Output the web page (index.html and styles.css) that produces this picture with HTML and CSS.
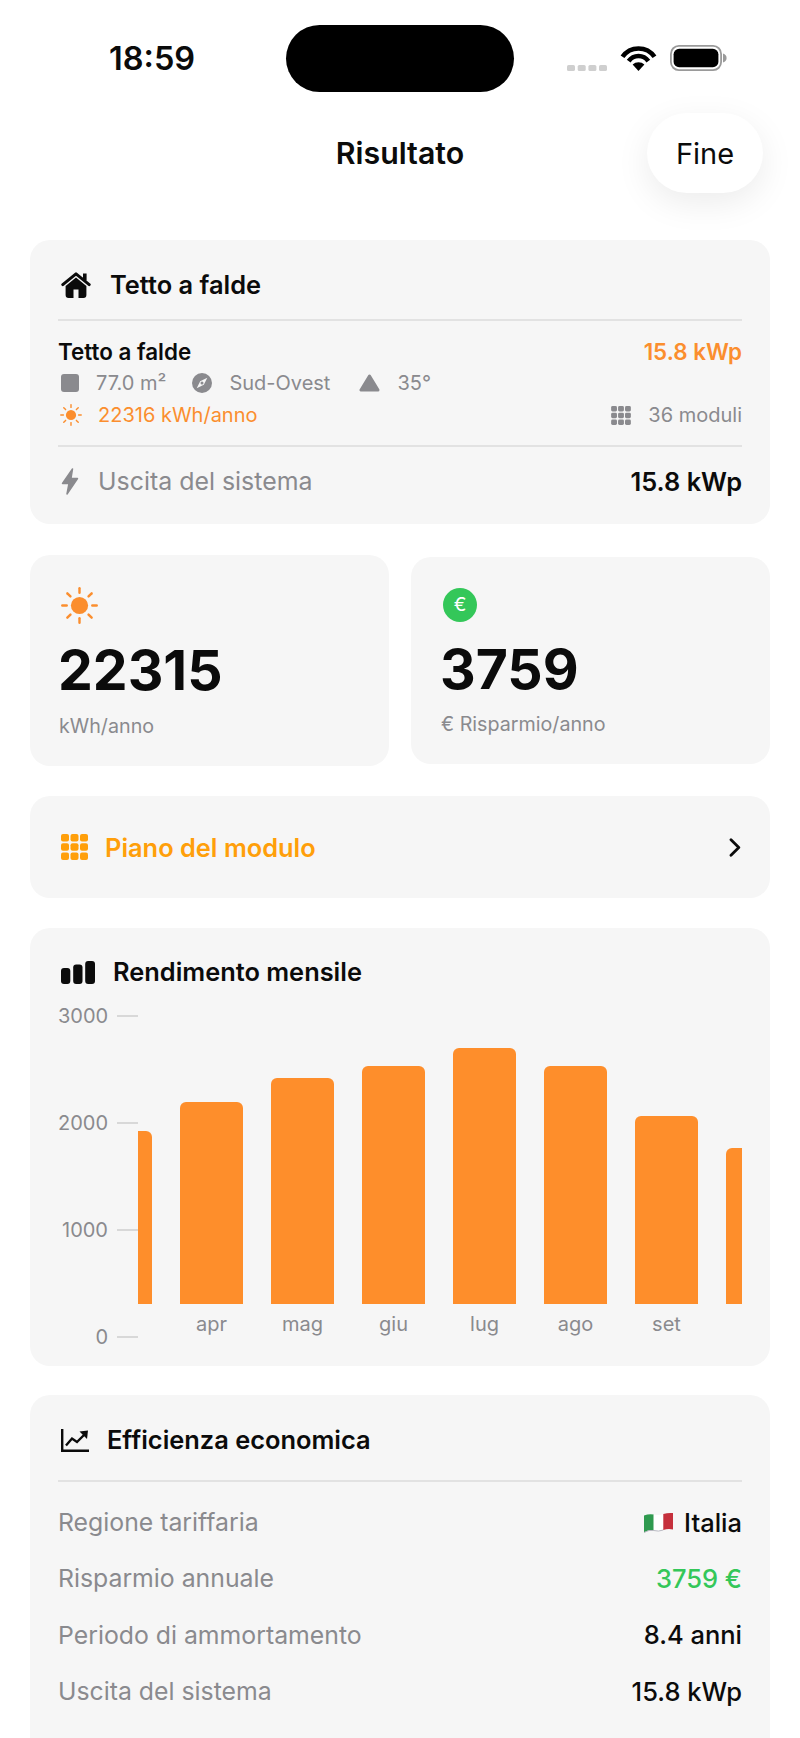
FILE: index.html
```html
<!DOCTYPE html>
<html>
	<head>
		<meta charset="UTF-8">
		<title>Risultato</title>
		<link rel="stylesheet" href="styles.css">
	</head>
	<body>
		<svg class="defs" width="0" height="0">
			<symbol id="sun" viewBox="-18.5 -18.5 37 37">
				<circle r="8.6" fill="currentColor"/>
				<g stroke="currentColor" stroke-width="2.4" stroke-linecap="round">
					<line y1="-17.2" y2="-12.8"/>
					<line y1="-17.2" y2="-12.8" transform="rotate(45)"/>
					<line y1="-17.2" y2="-12.8" transform="rotate(90)"/>
					<line y1="-17.2" y2="-12.8" transform="rotate(135)"/>
					<line y1="-17.2" y2="-12.8" transform="rotate(180)"/>
					<line y1="-17.2" y2="-12.8" transform="rotate(225)"/>
					<line y1="-17.2" y2="-12.8" transform="rotate(270)"/>
					<line y1="-17.2" y2="-12.8" transform="rotate(315)"/>
				</g>
			</symbol>
			<symbol id="grid" viewBox="0 0 27 26">
				<g fill="currentColor">
					<rect x="0" y="0" width="8" height="7.6" rx="2"/>
					<rect x="9.5" y="0" width="8" height="7.6" rx="2"/>
					<rect x="19" y="0" width="8" height="7.6" rx="2"/>
					<rect x="0" y="9.2" width="8" height="7.6" rx="2"/>
					<rect x="9.5" y="9.2" width="8" height="7.6" rx="2"/>
					<rect x="19" y="9.2" width="8" height="7.6" rx="2"/>
					<rect x="0" y="18.4" width="8" height="7.6" rx="2"/>
					<rect x="9.5" y="18.4" width="8" height="7.6" rx="2"/>
					<rect x="19" y="18.4" width="8" height="7.6" rx="2"/>
				</g>
			</symbol>
		</svg>

		<div class="status">
			<div class="time">18:59</div>
			<div class="island"></div>
			<div class="status-icons">
				<svg width="40" height="6" viewBox="0 0 40 6" fill="#cfcfcf">
					<rect x="0" width="8" height="6" rx="1.6"/>
					<rect x="10.7" width="8" height="6" rx="1.6"/>
					<rect x="21.4" width="8" height="6" rx="1.6"/>
					<rect x="32" width="8" height="6" rx="1.6"/>
				</svg>
				<svg width="37" height="25" viewBox="0 0 37 25">
					<path d="M2.5 10.8A19.5 19.5 0 0 1 34.5 10.8" fill="none" stroke="#000" stroke-width="4.6"/>
					<path d="M8.7 15.1A12 12 0 0 1 28.3 15.1" fill="none" stroke="#000" stroke-width="4.6"/>
					<path d="M18.5 25L12.6 18.6A8.6 8.6 0 0 1 24.4 18.6Z" fill="#000"/>
				</svg>
				<svg width="57" height="26" viewBox="0 0 57 26">
					<rect x="0.9" y="0.9" width="50.2" height="24.2" rx="8" fill="none" stroke="#9a9a9a" stroke-width="1.8"/>
					<rect x="3.6" y="3.8" width="44.8" height="18.4" rx="5.5" fill="#000"/>
					<path d="M53 8.5c2.4 .6 3.6 2.4 3.6 4.5s-1.2 3.9-3.6 4.5z" fill="#9a9a9a"/>
				</svg>
			</div>
		</div>

		<div class="nav">
			<div></div>
			<div class="nav-title">Risultato</div>
			<div class="nav-right"><button class="done">Fine</button></div>
		</div>

		<div class="page">
			<div class="card">
				<div class="card-head">
					<svg class="head-ico" width="30" height="26" viewBox="0 0 30 26">
						<path d="M1.8 12.6L15 1.8l13.2 10.8" fill="none" stroke="#0b0b0b" stroke-width="3" stroke-linecap="round" stroke-linejoin="round"/>
						<rect x="22" y="1.5" width="3.6" height="7" fill="#0b0b0b"/>
						<path d="M15 5.6L4.6 14V23a3 3 0 0 0 3 3h4.900V17.500h5V26h4.900a3 3 0 0 0 3-3V14Z" fill="#0b0b0b"/>
					</svg>
					<span class="head-title head-title-roof">Tetto a falde</span>
				</div>
				<div class="line"></div>
				<div class="roof">
					<div class="roof-row">
						<span class="roof-name">Tetto a falde</span>
						<span class="roof-power">15.8 kWp</span>
					</div>
					<div class="roof-row">
						<div class="meta">
							<span class="sq"></span>
							<span class="meta-text">77.0 m²</span>
							<svg class="compass" width="20" height="20" viewBox="0 0 20 20">
								<circle cx="10" cy="10" r="10" fill="#8a8a8e"/>
								<path d="M15.3 4.7L11.8 11.8L4.7 15.3L8.2 8.2Z" fill="#f6f6f6"/>
								<circle cx="10" cy="10" r="1.5" fill="#8a8a8e"/>
							</svg>
							<span class="meta-text">Sud-Ovest</span>
							<svg class="tri" width="21" height="18" viewBox="0 0 21 18">
								<path d="M10.5 2L2 16H19Z" fill="#8a8a8e" stroke="#8a8a8e" stroke-width="3" stroke-linejoin="round"/>
							</svg>
							<span class="meta-text">35°</span>
						</div>
					</div>
					<div class="roof-row">
						<div class="meta meta-orange">
							<svg class="sun-small" width="22" height="22"><use href="#sun"/></svg>
							<span>22316 kWh/anno</span>
						</div>
						<div class="meta">
							<svg class="grid-small" width="20" height="19"><use href="#grid"/></svg>
							<span class="meta-text">36 moduli</span>
						</div>
					</div>
				</div>
				<div class="line"></div>
				<div class="output">
					<div class="output-left">
						<svg width="18" height="27" viewBox="0 0 18 27">
							<path d="M11.5 1L1.500 15.500H8L6 26L16.500 10.500H10Z" fill="#8a8a8e" stroke="#8a8a8e" stroke-width="1.5" stroke-linejoin="round"/>
						</svg>
						<span>Uscita del sistema</span>
					</div>
					<span class="val">15.8 kWp</span>
				</div>
			</div>

			<div class="stats">
				<div class="card stat stat-a">
					<svg class="stat-sun" width="37" height="37"><use href="#sun"/></svg>
					<div class="num">22315</div>
					<div class="num-label">kWh/anno</div>
				</div>
				<div class="card stat stat-b">
					<div class="euro">€</div>
					<div class="num">3759</div>
					<div class="num-label">€ Risparmio/anno</div>
				</div>
			</div>

			<div class="card plan">
				<div class="plan-left">
					<svg width="27" height="26"><use href="#grid"/></svg>
					<span>Piano del modulo</span>
				</div>
				<svg width="12" height="19" viewBox="0 0 12 19">
					<path d="M2 1.8L9.8 9.5L2 17.2" fill="none" stroke="#0b0b0b" stroke-width="2.8" stroke-linecap="round" stroke-linejoin="round"/>
				</svg>
			</div>

			<div class="card chart-card">
				<div class="card-head chart-head">
					<svg class="head-ico" width="34" height="23" viewBox="0 0 34 23" fill="#0b0b0b">
						<rect x="0" y="7" width="9.3" height="16" rx="3"/>
						<rect x="12.2" y="3.5" width="9.3" height="19.5" rx="3"/>
						<rect x="24.2" y="0" width="9.8" height="23" rx="3"/>
					</svg>
					<span class="head-title">Rendimento mensile</span>
				</div>
				<div class="chart">
					<div class="axis">
						<div class="axis-row"><span>3000</span><i></i></div>
						<div class="axis-row"><span>2000</span><i></i></div>
						<div class="axis-row"><span>1000</span><i></i></div>
						<div class="axis-row"><span>0</span><i></i></div>
					</div>
					<div class="plot">
						<div class="bars">
							<div class="col"><div class="bar" style="height:173px"></div><div class="month"></div></div>
							<div class="col"><div class="bar" style="height:202px"></div><div class="month">apr</div></div>
							<div class="col"><div class="bar" style="height:226px"></div><div class="month">mag</div></div>
							<div class="col"><div class="bar" style="height:238px"></div><div class="month">giu</div></div>
							<div class="col"><div class="bar" style="height:256px"></div><div class="month">lug</div></div>
							<div class="col"><div class="bar" style="height:238px"></div><div class="month">ago</div></div>
							<div class="col"><div class="bar" style="height:188px"></div><div class="month">set</div></div>
							<div class="col"><div class="bar" style="height:156px"></div><div class="month"></div></div>
						</div>
					</div>
				</div>
			</div>

			<div class="card econ">
				<div class="card-head">
					<svg class="head-ico" width="28" height="23" viewBox="0 0 28 23">
						<path d="M1.2 0V21.8H28" fill="none" stroke="#0b0b0b" stroke-width="2.4"/>
						<path d="M5 16.5L11 9.5L16 13L23 6" fill="none" stroke="#0b0b0b" stroke-width="2.4"/>
						<path d="M18.5 2.5L27 1.5L26 10Z" fill="#0b0b0b"/>
					</svg>
					<span class="head-title head-title-econ">Efficienza economica</span>
				</div>
				<div class="line"></div>
				<div class="rows">
					<div class="row">
						<span>Regione tariffaria</span>
						<span class="val-m flag-val">
							<svg width="29" height="21" viewBox="0 0 29 21">
								<path d="M0 3.5Q5 1.5 9.7 2.5V18.5Q5 17.5 0 20.5Z" fill="#2f9a4f"/>
								<path d="M9.7 2.5Q14.5 3.8 19.3 2V18Q14.5 19.9 9.7 18.5Z" fill="#fff"/>
								<path d="M0 20.5Q5 17.5 9.7 18.5Q14.5 19.9 19.3 18" fill="none" stroke="#b9b9c2" stroke-width="1"/>
								<path d="M19.3 2Q24 .5 29 1V17.5Q24 16.5 19.3 18Z" fill="#c5303c"/>
							</svg>
							Italia
						</span>
					</div>
					<div class="row"><span>Risparmio annuale</span><span class="val-m green">3759 €</span></div>
					<div class="row"><span>Periodo di ammortamento</span><span class="val-m">8.4 anni</span></div>
					<div class="row"><span>Uscita del sistema</span><span class="val-m">15.8 kWp</span></div>
				</div>
			</div>
		</div>
	</body>
</html>
```

FILE: styles.css
```css
*{
	margin: 0;
	padding: 0;
	box-sizing: border-box;
}
html,body{
	height: 1738px;
	overflow: hidden;
}
body{
	width: 800px;
	background: #fff;
	color: #0b0b0b;
	font-family: Inter, "Liberation Sans", sans-serif;
}
svg{
	display: block;
	flex: none;
}
.defs{
	position: absolute;
}

/* status bar */
.status{
	display: grid;
	grid-template-columns: 1fr 228px 1fr;
	align-items: center;
	padding-top: 25px;
}
.time{
	padding-left: 109px;
	font-size: 32.5px;
	font-weight: 600;
	line-height: 40px;
}
.island{
	height: 67px;
	background: #000;
	border-radius: 34px;
}
.status-icons{
	display: flex;
	align-items: flex-end;
	gap: 13px;
	align-self: start;
	padding: 20px 0 0 53px;
}

/* nav */
.nav{
	display: grid;
	grid-template-columns: 1fr auto 1fr;
	align-items: center;
	margin-top: 21px;
	padding-right: 37px;
	padding-left: 37px;
}
.nav-title{
	font-size: 30.3px;
	font-weight: 600;
}
.nav-right{
	display: flex;
	justify-content: flex-end;
}
.done{
	width: 116px;
	height: 80px;
	border: 0;
	border-radius: 40px;
	background: #fff;
	box-shadow: 0 10px 34px rgba(0,0,0,.08);
	color: #0b0b0b;
	font-family: inherit;
	font-size: 29px;
}

/* cards */
.page{
	display: flex;
	flex-direction: column;
	gap: 30px;
	margin-top: 47px;
	padding: 0 30px;
}
.card{
	padding: 0 28px;
	background: #f6f6f6;
	border-radius: 20px;
}
.line{
	height: 2px;
	background: #e2e2e2;
}
.card-head{
	display: flex;
	align-items: center;
	height: 79px;
	padding: 28px 0 17px;
}
.head-ico{
	margin-left: 3px;
}
.head-title{
	font-size: 25.4px;
	font-weight: 600;
	line-height: 34px;
	margin-left: 18px;
}
.head-title-roof{
	margin-left: 19px;
}
.head-title-econ{
	margin-left: 18px;
}

/* roof card */
.roof{
	padding: 14px 0 14px;
}
.roof-row{
	display: flex;
	justify-content: space-between;
	align-items: center;
	height: 32px;
}
.roof-name{
	font-size: 22.4px;
	font-weight: 600;
}
.roof-power{
	color: #fb8e2e;
	font-size: 22.4px;
	font-weight: 600;
}
.meta{
	display: flex;
	align-items: center;
	color: #8a8a8e;
	font-size: 20px;
}
.meta-orange{
	color: #fb8e2e;
}
.sq{
	flex: none;
	width: 18px;
	height: 18px;
	margin-left: 3px;
	border-radius: 3px;
	background: #8a8a8e;
}
.meta-text{
	margin-left: 17px;
}
.compass{
	margin-left: 26px;
}
.tri{
	margin-left: 29px;
}
.sun-small{
	margin: 0 16px 0 2px;
}
.grid-small{
	color: #8a8a8e;
}
.output{
	display: flex;
	justify-content: space-between;
	align-items: center;
	height: 68px;
	margin-bottom: 9px;
	font-size: 24.9px;
}
.output-left{
	display: flex;
	align-items: center;
	gap: 19px;
	padding-left: 3px;
	color: #8a8a8e;
}
.val{
	font-size: 25.4px;
	font-weight: 600;
}

/* stats */
.stats{
	display: grid;
	grid-template-columns: 359px 359px;
	gap: 22px;
	align-items: center;
	margin-top: 1px;
}
.stat{
	padding: 0 30px;
}
.stat-a{
	padding: 32px 29px 27px;
}
.stat-b{
	padding-top: 31px;
	padding-bottom: 27px;
}
.stat-sun{
	margin-left: 2px;
	color: #fb8e2e;
}
.euro{
	width: 34px;
	height: 34px;
	margin-left: 2px;
	border-radius: 50%;
	background: #34c759;
	color: #fff;
	font-size: 19px;
	line-height: 34px;
	text-align: center;
}
.num{
	margin-top: 16px;
	margin-left: -1px;
	font-size: 55.3px;
	font-weight: 700;
	line-height: 60px;
}
.stat-b .num{
	margin-top: 17px;
}
.num-label{
	margin-top: 13px;
	color: #8a8a8e;
	font-size: 19.7px;
	line-height: 26px;
}
.stat-b .num-label{
	margin-top: 12px;
}

/* module plan */
.plan{
	display: flex;
	justify-content: space-between;
	align-items: center;
	height: 102px;
	padding-right: 29px;
}
.plan-left{
	display: flex;
	align-items: center;
	gap: 17px;
	padding-left: 3px;
	color: #ff9f0a;
	font-size: 25.4px;
	font-weight: 600;
}

/* chart */
.chart-card{
	height: 438px;
}
.chart-head{
	height: 75px;
	padding: 27px 0 14px;
}
.chart{
	display: flex;
}
.axis{
	display: flex;
	flex-direction: column;
	justify-content: space-between;
	flex: none;
	width: 80px;
	height: 347px;
}
.axis-row{
	display: flex;
	align-items: center;
	justify-content: flex-end;
	gap: 9px;
	height: 26px;
	color: #8a8a8e;
	font-size: 20px;
}
.axis-row i{
	width: 21px;
	height: 1.5px;
	background: #d8d8d8;
}
.plot{
	width: 604px;
	height: 347px;
	overflow: hidden;
}
.bars{
	display: flex;
	gap: 28px;
	margin-left: -49px;
}
.col{
	display: flex;
	flex-direction: column;
	justify-content: flex-end;
	flex: none;
	width: 63px;
	height: 334px;
}
.bar{
	background: #fe8e2b;
	border-radius: 6px 6px 0 0;
}
.month{
	height: 26px;
	margin-top: 7px;
	color: #8a8a8e;
	font-size: 20px;
	line-height: 26px;
	text-align: center;
}

/* economy */
.econ{
	margin-top: -1px;
	padding-bottom: 60px;
}
.econ .card-head{
	height: 85px;
	padding: 28px 0 23px;
}
.rows{
	padding-top: 12px;
}
.row{
	display: flex;
	justify-content: space-between;
	align-items: center;
	height: 56.3px;
	color: #8a8a8e;
	font-size: 24.8px;
}
.val-m{
	color: #0b0b0b;
	font-size: 25.5px;
	font-weight: 500;
}
.green{
	color: #34c759;
}
.flag-val{
	display: flex;
	align-items: center;
	gap: 11px;
}
```
